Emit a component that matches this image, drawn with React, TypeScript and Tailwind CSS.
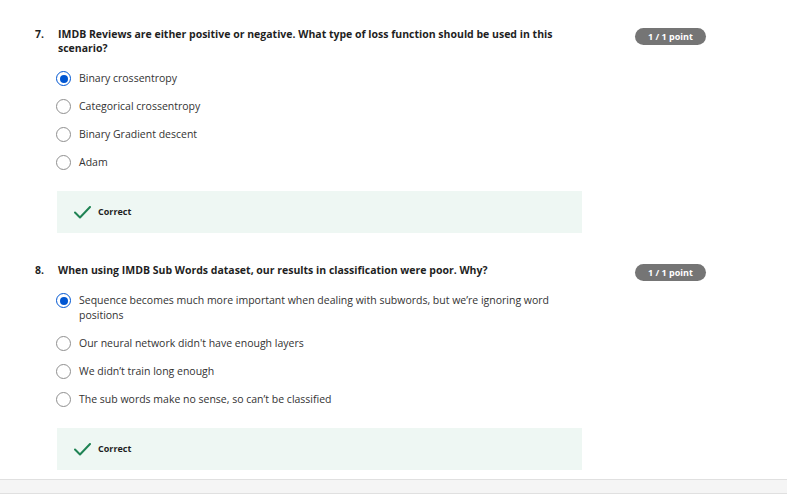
import React from "react";

type Option = { label: string; selected?: boolean };

type Question = {
  num: string;
  text: string;
  options: Option[];
};

const questions: Question[] = [
  {
    num: "7.",
    text: "IMDB Reviews are either positive or negative. What type of loss function should be used in this scenario?",
    options: [
      { label: "Binary crossentropy", selected: true },
      { label: "Categorical crossentropy" },
      { label: "Binary Gradient descent" },
      { label: "Adam" },
    ],
  },
  {
    num: "8.",
    text: "When using IMDB Sub Words dataset, our results in classification were poor. Why?",
    options: [
      {
        label:
          "Sequence becomes much more important when dealing with subwords, but we\u2019re ignoring word positions",
        selected: true,
      },
      { label: "Our neural network didn't have enough layers" },
      { label: "We didn\u2019t train long enough" },
      { label: "The sub words make no sense, so can\u2019t be classified" },
    ],
  },
];

function Radio({ selected }: { selected?: boolean }) {
  if (selected) {
    return (
      <span className="flex h-[15px] w-[15px] shrink-0 items-center justify-center rounded-full border-[1.5px] border-[#0056d2] bg-white">
        <span className="h-[8px] w-[8px] rounded-full bg-[#0056d2]" />
      </span>
    );
  }
  return <span className="h-[15px] w-[15px] shrink-0 rounded-full border border-[#8f8f8f] bg-white" />;
}

function CorrectBox() {
  return (
    <div className="ml-[57px] mt-[21px] flex h-[42px] w-[525px] items-center bg-[#eef7f3] pl-[17px]">
      <svg width="17" height="13" viewBox="0 0 17 13" fill="none">
        <path d="M1 6.5 L6 11.5 L16 1" stroke="#1f8354" strokeWidth="2" strokeLinecap="round" strokeLinejoin="round" />
      </svg>
      <span className="ml-[7px] text-[9px] font-bold text-[#1f1f1f]">Correct</span>
    </div>
  );
}

function QuestionBlock({ q }: { q: Question }) {
  return (
    <div>
      <div className="flex items-start pl-[35px] pr-[81px]">
        <span className="w-[23px] shrink-0 text-[10.5px] font-bold leading-[14px] text-[#1f1f1f]">{q.num}</span>
        <p className="w-[500px] text-[10.5px] font-bold leading-[14px] text-[#1f1f1f]">{q.text}</p>
        {/* badge sits in a text-height slot so it doesn't push the options down */}
        <div className="ml-auto h-[14px]">
          <span className="mt-[1px] flex h-[17px] w-[71px] items-center justify-center rounded-full bg-[#757575] text-[9px] font-bold text-white">
            1 / 1 point
          </span>
        </div>
      </div>
      <div className="ml-[56px] mt-[16px] flex flex-col gap-[13px]">
        {q.options.map((o) => (
          <div key={o.label} className="flex items-start gap-[8px]">
            <Radio selected={o.selected} />
            <span className="w-[490px] text-[10.5px] leading-[15px] text-[#333333]">{o.label}</span>
          </div>
        ))}
      </div>
      <CorrectBox />
    </div>
  );
}

export default function App() {
  return (
    <div className="flex h-[494px] w-[787px] flex-col bg-white font-['Open_Sans',sans-serif]">
      <div className="flex-1 pt-[27px]">
        <QuestionBlock q={questions[0]} />
        <div className="mt-[30px]">
          <QuestionBlock q={questions[1]} />
        </div>
      </div>
      <div className="h-[15px] border-y border-[#e0e0e0] bg-[#f5f5f5]" />
    </div>
  );
}
